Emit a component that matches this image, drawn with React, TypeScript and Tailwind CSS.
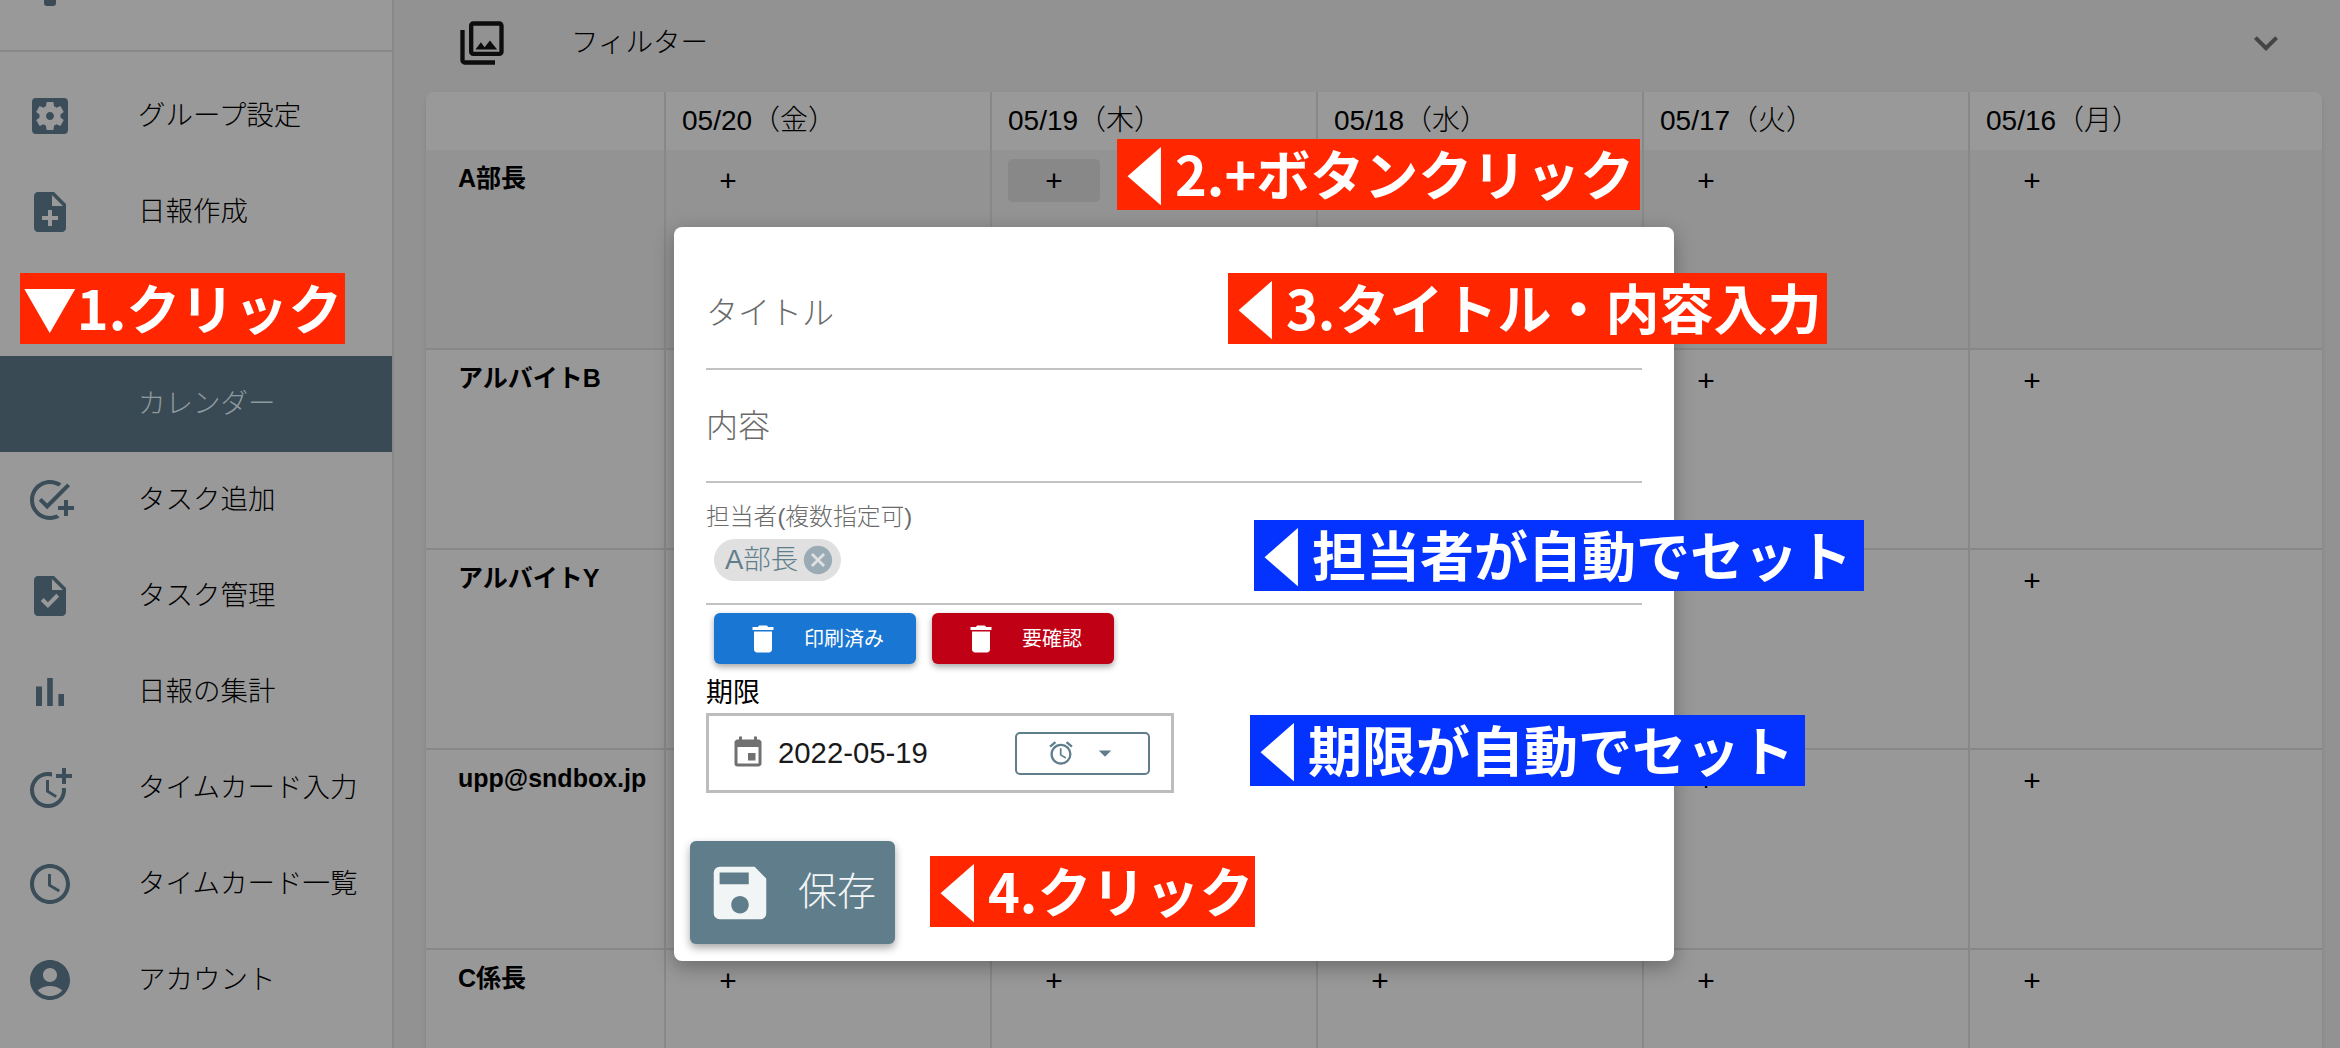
import React from "react";
import {
  MdAccessAlarm,
  MdAccessTime,
  MdAccountCircle,
  MdArrowDropDown,
  MdCancel,
  MdDelete,
  MdEvent,
  MdExpandMore,
  MdMoreTime,
  MdNoteAdd,
  MdOutlineAddTask,
  MdOutlinePhotoLibrary,
  MdSave,
  MdSettingsApplications,
  MdTask,
} from "react-icons/md";

// thinner bars than the current MdBarChart
const BarChartIcon = ({ size, className }: { size: number; className: string }) => (
  <svg width={size} height={size} viewBox="0 0 24 24" fill="currentColor" className={className}>
    <path d="M5 9.2h3V19H5zM10.6 5h2.8v14h-2.8zm5.6 8H19v6h-2.8z" />
  </svg>
);

const navItems = [
  { label: "グループ設定", icon: MdSettingsApplications },
  { label: "日報作成", icon: MdNoteAdd },
  { label: "", icon: null },
  { label: "カレンダー", icon: null, active: true },
  { label: "タスク追加", icon: MdOutlineAddTask },
  { label: "タスク管理", icon: MdTask },
  { label: "日報の集計", icon: BarChartIcon },
  { label: "タイムカード入力", icon: MdMoreTime },
  { label: "タイムカード一覧", icon: MdAccessTime },
  { label: "アカウント", icon: MdAccountCircle },
];

const days = ["05/20（金）", "05/19（木）", "05/18（水）", "05/17（火）", "05/16（月）"];
const people = ["A部長", "アルバイトB", "アルバイトY", "upp@sndbox.jp", "C係長"];

// cells whose + sits fully under the dialog or a banner
const covered = ["0-2", "1-0", "1-1", "1-2", "2-0", "2-1", "2-2", "2-3", "3-0", "3-1", "3-2"];

const Banner = ({ className, text }: { className: string; text: string }) => (
  <div
    className={`absolute z-20 flex items-center whitespace-nowrap pb-[4px] pl-[8px] text-[54px] leading-none font-bold text-white [font-family:'Noto_Sans_CJK_JP',sans-serif] ${className}`}
  >
    <span className="inline-block w-[50px] origin-left scale-x-[0.66] text-[62px]">◀</span>
    {text}
  </div>
);

export default function App() {
  return (
    <div className="relative flex h-screen w-full overflow-hidden bg-[#929292] font-light text-black [font-family:'Liberation_Sans','Noto_Sans_CJK_JP',sans-serif]">
      {/* Sidebar */}
      <aside className="flex w-[394px] shrink-0 flex-col border-r-2 border-[#888888] bg-[#999999]">
        <div className="h-[52px] shrink-0 border-b-2 border-[#888888] pl-[44px]">
          <div className="h-[6px] w-[12px] rounded-b-[3px] bg-[#3b4a54]" />
        </div>
        <nav className="pt-[16px]">
          {navItems.map((item, i) => {
            const Icon = item.icon;
            return (
              <div
                key={i}
                className={`flex h-[96px] items-center ${item.active ? "bg-[#3a4a54] text-[#8f9a9f]" : ""}`}
              >
                <div className="flex w-[138px] shrink-0 justify-center pr-[38px]">
                  {Icon && <Icon size={48} className="text-[#3b4d58]" />}
                </div>
                <span className="text-[27.5px]">{item.label}</span>
              </div>
            );
          })}
        </nav>
      </aside>

      {/* Main */}
      <main className="flex min-w-0 flex-1 flex-col">
        <div className="flex h-[92px] shrink-0 items-center pb-[6px] pl-[62px] pr-[50px]">
          <MdOutlinePhotoLibrary size={52} className="text-[#0d0d0d]" />
          <span className="ml-[63px] text-[27.5px]">フィルター</span>
          <MdExpandMore size={48} className="ml-auto text-[#444444]" />
        </div>

        <div className="ml-[32px] mr-[18px] flex-1 rounded-t-lg bg-[#999999] shadow-md">
          <div className="grid h-[58px] grid-cols-[240px_repeat(4,326px)_1fr] rounded-t-lg bg-[#999999]">
            <div className="border-r-2 border-[#888888]" />
            {days.map((d) => (
              <div key={d} className="flex items-center border-r-2 border-[#888888] pl-[16px] text-[28px] last:border-r-0">
                {d}
              </div>
            ))}
          </div>
          {people.map((name, r) => (
            <div
              key={name}
              className={`grid h-[200px] grid-cols-[240px_repeat(4,326px)_1fr] border-b-2 border-[#888888] ${r === 0 ? "bg-[#939393]" : "bg-[#989898]"}`}
            >
              <div className="border-r-2 border-[#888888] pl-[32px] pt-[10px] text-[25px] font-bold">{name}</div>
              {days.map((d, c) => (
                <div key={d} className="border-r-2 border-[#888888] pl-[16px] pt-[9px] last:border-r-0">
                  {!covered.includes(`${r}-${c}`) && (
                    <div
                      className={`flex h-[43px] w-[92px] items-center justify-center rounded-[5px] text-[30px] ${r === 0 && c === 1 ? "bg-[#888888]" : ""}`}
                    >
                      +
                    </div>
                  )}
                </div>
              ))}
            </div>
          ))}
        </div>
      </main>

      {/* Dialog */}
      <div className="absolute left-[674px] top-[227px] z-10 h-[734px] w-[1000px] rounded-lg bg-white px-[32px] shadow-[0_6px_20px_rgba(0,0,0,0.3)]">
        <div className="flex h-[143px] items-end border-b-2 border-[#c2c2c2] pb-[35px] text-[32px] leading-[40px] text-[#6b6b6b]">
          タイトル
        </div>
        <div className="flex h-[113px] items-end border-b-2 border-[#c2c2c2] pb-[35px] text-[32px] leading-[40px] text-[#6b6b6b]">
          内容
        </div>
        <div className="h-[122px] border-b-2 border-[#c2c2c2] pt-[20px]">
          <div className="text-[23.8px] leading-[28px] text-[#6b6b6b]">担当者(複数指定可)</div>
          <div className="ml-[8px] mt-[8px] flex h-[42px] w-[127px] items-center rounded-full bg-[#e0e0e0] pl-[11px] text-[27.5px] text-[#607d8b]">
            A部長
            <MdCancel size={34} className="ml-[3px] text-[#9aabb5]" />
          </div>
        </div>
        <div className="ml-[8px] mt-[8px] flex gap-[16px]">
          <button className="flex h-[51px] w-[202px] items-center rounded-md bg-[#1976d2] pl-[31px] text-[20px] font-normal text-white shadow-[0_3px_6px_rgba(0,0,0,0.35)]">
            <MdDelete size={36} />
            <span className="ml-[23px]">印刷済み</span>
          </button>
          <button className="flex h-[51px] w-[182px] items-center rounded-md bg-[#c00014] pl-[31px] text-[20px] font-normal text-white shadow-[0_3px_6px_rgba(0,0,0,0.35)]">
            <MdDelete size={36} />
            <span className="ml-[23px]">要確認</span>
          </button>
        </div>
        <div className="mt-[12px] text-[27px] leading-[34px] font-normal text-black">期限</div>
        <div className="mt-[3px] flex h-[80px] w-[468px] items-center border-[3px] border-[#bdbdbd] pl-[21px]">
          <MdEvent size={36} className="text-[#707070]" />
          <span className="ml-[12px] text-[29.3px] text-[#1a1a1a]">2022-05-19</span>
          <div className="ml-auto mr-[21px] flex h-[43px] w-[135px] items-center rounded-[5px] border-2 border-[#607d8b] pl-[30px] text-[#607d8b]">
            <MdAccessAlarm size={28} />
            <MdArrowDropDown size={30} className="ml-[15px]" />
          </div>
        </div>
        <button className="-ml-[16px] mt-[48px] flex h-[103px] w-[205px] items-center rounded-md bg-[#607d8b] pl-[15px] text-[39px] text-[#f2f5f6] shadow-[0_4px_8px_rgba(0,0,0,0.35)]">
          <MdSave size={70} />
          <span className="ml-[23px]">保存</span>
        </button>
      </div>

      {/* Annotation banners */}
      <div className="absolute left-[20px] top-[273px] z-20 flex h-[71px] w-[325px] items-center justify-center whitespace-nowrap bg-[#ff2600] pb-[4px] text-[54px] leading-none font-bold text-white [font-family:'Noto_Sans_CJK_JP',sans-serif]">
        ▼1.クリック
      </div>
      <Banner className="left-[1117px] top-[139px] h-[71px] w-[523px] bg-[#ff2600]" text="2.+ボタンクリック" />
      <Banner className="left-[1228px] top-[273px] h-[71px] w-[599px] bg-[#ff2600]" text="3.タイトル・内容入力" />
      <Banner className="left-[1254px] top-[520px] h-[71px] w-[610px] bg-[#0433ff]" text="担当者が自動でセット" />
      <Banner className="left-[1250px] top-[715px] h-[71px] w-[555px] bg-[#0433ff]" text="期限が自動でセット" />
      <Banner className="left-[930px] top-[856px] h-[71px] w-[325px] bg-[#ff2600]" text="4.クリック" />
    </div>
  );
}
